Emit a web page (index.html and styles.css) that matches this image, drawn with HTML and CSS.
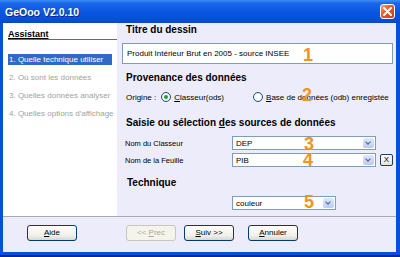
FILE: index.html
```html
<!DOCTYPE html>
<html lang="fr">
<head>
    <meta charset="UTF-8">
    <title>GeOoo V2.0.10</title>
    <link rel="stylesheet" href="styles.css">
</head>
<body>
<div class="window">
  <!-- Title bar -->
  <div class="titlebar">
    <span class="title">GeOoo V2.0.10</span>
    <span class="close-btn">
      <svg width="9" height="9" viewBox="0 0 9 9"><path d="M1 1 L8 8 M8 1 L1 8" stroke="#fff" stroke-width="2" stroke-linecap="round"/></svg>
    </span>
  </div>

  <div class="client">
    <div class="main">
      <!-- Wizard steps -->
      <div class="sidebar">
        <div class="side-title">Assistant</div>
        <ul class="steps">
          <li class="active">1. Quelle technique utiliser</li>
          <li>2. Où sont les données</li>
          <li>3. Quelles données analyser</li>
          <li>4. Quelles options d'affichage</li>
        </ul>
      </div>

      <!-- Step content -->
      <div class="content">
        <h2 class="h-title">Titre du dessin</h2>
        <div class="textbox">Produit Intérieur Brut en 2005 - source INSEE</div>

        <h2 class="h-prov">Provenance des données</h2>
        <div class="origin-row">
          <span class="origin-label">Origine :</span>
          <span class="radio checked"></span>
          <span class="radio-label"><u>C</u>lasseur(ods)</span>
          <span class="radio second"></span>
          <span class="radio-label"><u>B</u>ase de données (odb) enregistée</span>
        </div>

        <h2 class="h-src">Saisie ou sélection <u>d</u>es sources de données</h2>
        <div class="field-row first">
          <span class="field-label">Nom du Classeur</span>
          <div class="combo wide"><span class="combo-text">DEP</span><span class="combo-arrow"></span></div>
        </div>
        <div class="field-row">
          <span class="field-label">Nom de la Feuille</span>
          <div class="combo wide"><span class="combo-text">PIB</span><span class="combo-arrow"></span></div>
          <span class="x-btn">X</span>
        </div>

        <h2 class="h-tech">Technique</h2>
        <div class="combo narrow"><span class="combo-text">couleur</span><span class="combo-arrow"></span></div>

        <!-- orange annotation numbers -->
        <span class="mark m1">1</span>
        <span class="mark m2">2</span>
        <span class="mark m3">3</span>
        <span class="mark m4">4</span>
        <span class="mark m5">5</span>
      </div>
    </div>

    <!-- Buttons -->
    <div class="footer">
      <span class="btn"><u>A</u>ide</span>
      <span class="btn disabled prev">&lt;&lt; <u>P</u>rec</span>
      <span class="btn next"><u>S</u>uiv &gt;&gt;</span>
      <span class="btn cancel"><u>A</u>nnuler</span>
    </div>
  </div>
</div>
</body>
</html>
```

FILE: styles.css
```css
body {
  margin: 0;
  font-family: "Liberation Sans", Arial, sans-serif;
  font-size: 8px;
}

/* Window frame */
.window {
  width: 400px;
  height: 257px;
  background-color: #0a4fdc;
  display: flex;
  flex-direction: column;
  box-sizing: border-box;
  border-bottom: 2px solid #0a2a8c;
}

.titlebar {
  height: 23px;
  display: flex;
  align-items: center;
  justify-content: space-between;
  background: linear-gradient(#3d8cf5 0%, #1a66e8 15%, #0a55e0 55%, #0650d8 85%, #0a47c8 100%);
  padding-left: 5px;
  padding-right: 5px;
  box-sizing: border-box;
}

.title {
  color: #fff;
  font-weight: bold;
  font-size: 10.5px;
  text-shadow: 1px 1px 0 #0a2a8c;
}

.close-btn {
  width: 15px;
  height: 15px;
  box-sizing: border-box;
  border: 1px solid #fff;
  border-radius: 3px;
  background: linear-gradient(135deg, #f3a084 0%, #e2592f 45%, #c8401c 100%);
  display: flex;
  align-items: center;
  justify-content: center;
}

.client {
  flex: 1;
  margin: 0 4px 3px 3px;
  background-color: #ececfa;
  display: flex;
  flex-direction: column;
}

.main {
  height: 193px;
  display: flex;
}

/* Sidebar */
.sidebar {
  width: 115px;
  background-color: #fff;
}

.side-title {
  margin: 6px 0 0 5px;
  font-weight: bold;
  font-size: 9px;
  line-height: 10px;
  text-decoration: underline;
  border-bottom: 1px solid #6a6a6a;
}

.steps {
  list-style: none;
  margin: 14px 0 0 5px;
  padding: 0;
}

.steps li {
  width: 103px;
  height: 11px;
  line-height: 11px;
  padding-left: 1px;
  margin-bottom: 7px;
  color: #a2a2a2;
  white-space: nowrap;
}

.steps li.active {
  background-color: #316ac5;
  color: #fff;
}

/* Content */
.content {
  flex: 1;
  position: relative;
  padding: 0 3px 0 9px;
}

.content h2 {
  margin: 0;
  font-size: 10px;
  line-height: 14px;
  font-weight: bold;
  color: #000;
}

.textbox {
  margin: 6px 0 0 -4px;
  height: 21px;
  box-sizing: border-box;
  border: 1px solid #7f9db9;
  background-color: #fff;
  padding-left: 4px;
  line-height: 19px;
}

.h-prov { margin-top: 7px !important; }

.origin-row {
  margin-top: 5px;
  height: 14px;
  display: flex;
  align-items: center;
}

.origin-label { margin-right: 5px; }

.radio {
  width: 10px;
  height: 10px;
  box-sizing: border-box;
  border: 1px solid #1c5180;
  border-radius: 50%;
  background: radial-gradient(#ffffff 40%, #dcdad0 100%);
  margin-right: 3px;
  position: relative;
}

.radio.checked::after {
  content: "";
  position: absolute;
  left: 2px;
  top: 2px;
  width: 4px;
  height: 4px;
  border-radius: 50%;
  background-color: #21a121;
}

.radio.second { margin-left: 29px; }

.h-src { margin-top: 12px !important; }

.field-row {
  margin-top: 3px;
  height: 14px;
  display: flex;
  align-items: center;
}

.field-row.first { margin-top: 6px; }

.field-label {
  width: 106px;
  margin-left: -1px;
  font-size: 7.5px;
}

.combo {
  height: 14px;
  box-sizing: border-box;
  border: 1px solid #7f9db9;
  background-color: #fff;
  display: flex;
  align-items: center;
  justify-content: space-between;
  padding: 0 1px 0 3px;
}

.combo.wide { width: 144px; margin-left: 1px; }

.combo.narrow {
  width: 104px;
  margin: 6px 0 0 106px;
}

.combo-arrow {
  width: 11px;
  height: 10px;
  border-radius: 2px;
  background: linear-gradient(#dfe8fd, #b9cbf6);
  position: relative;
}

.combo-arrow::after {
  content: "";
  position: absolute;
  left: 3px;
  top: 2px;
  width: 3px;
  height: 3px;
  border-right: 1.5px solid #4d6185;
  border-bottom: 1.5px solid #4d6185;
  transform: rotate(45deg);
}

.x-btn {
  margin-left: 4px;
  width: 13px;
  height: 12px;
  box-sizing: border-box;
  border: 1px solid #1c3a6e;
  border-radius: 2px;
  background: linear-gradient(#ffffff, #e6e4d8);
  font-size: 8px;
  line-height: 10px;
  text-align: center;
}

.h-tech {
  margin-top: 9px !important;
  padding-left: 1px;
}

/* Orange annotations */
.mark {
  position: absolute;
  font-size: 18px;
  line-height: 18px;
  font-weight: bold;
  color: #f2951c;
}

.m1 { left: 186px; top: 23px; }
.m2 { left: 185px; top: 63px; }
.m3 { left: 187px; top: 112px; }
.m4 { left: 186px; top: 128px; }
.m5 { left: 187px; top: 170px; }

/* Footer */
.footer {
  flex: 1;
  border-top: 1px solid #a8a8b8;
  display: flex;
  align-items: flex-start;
  padding: 8px 0 0 24px;
}

.btn {
  width: 50px;
  height: 16px;
  box-sizing: border-box;
  border: 1px solid #003c74;
  border-radius: 3px;
  background: linear-gradient(#ffffff, #f0efe8 70%, #d8d6cc);
  text-align: center;
  line-height: 14px;
}

.btn.disabled {
  border-color: #c9c7ba;
  background: #f5f4ea;
  color: #aca899;
}

.prev { margin-left: 49px; }
.next { margin-left: 8px; }
.cancel { margin-left: 14px; }
```
